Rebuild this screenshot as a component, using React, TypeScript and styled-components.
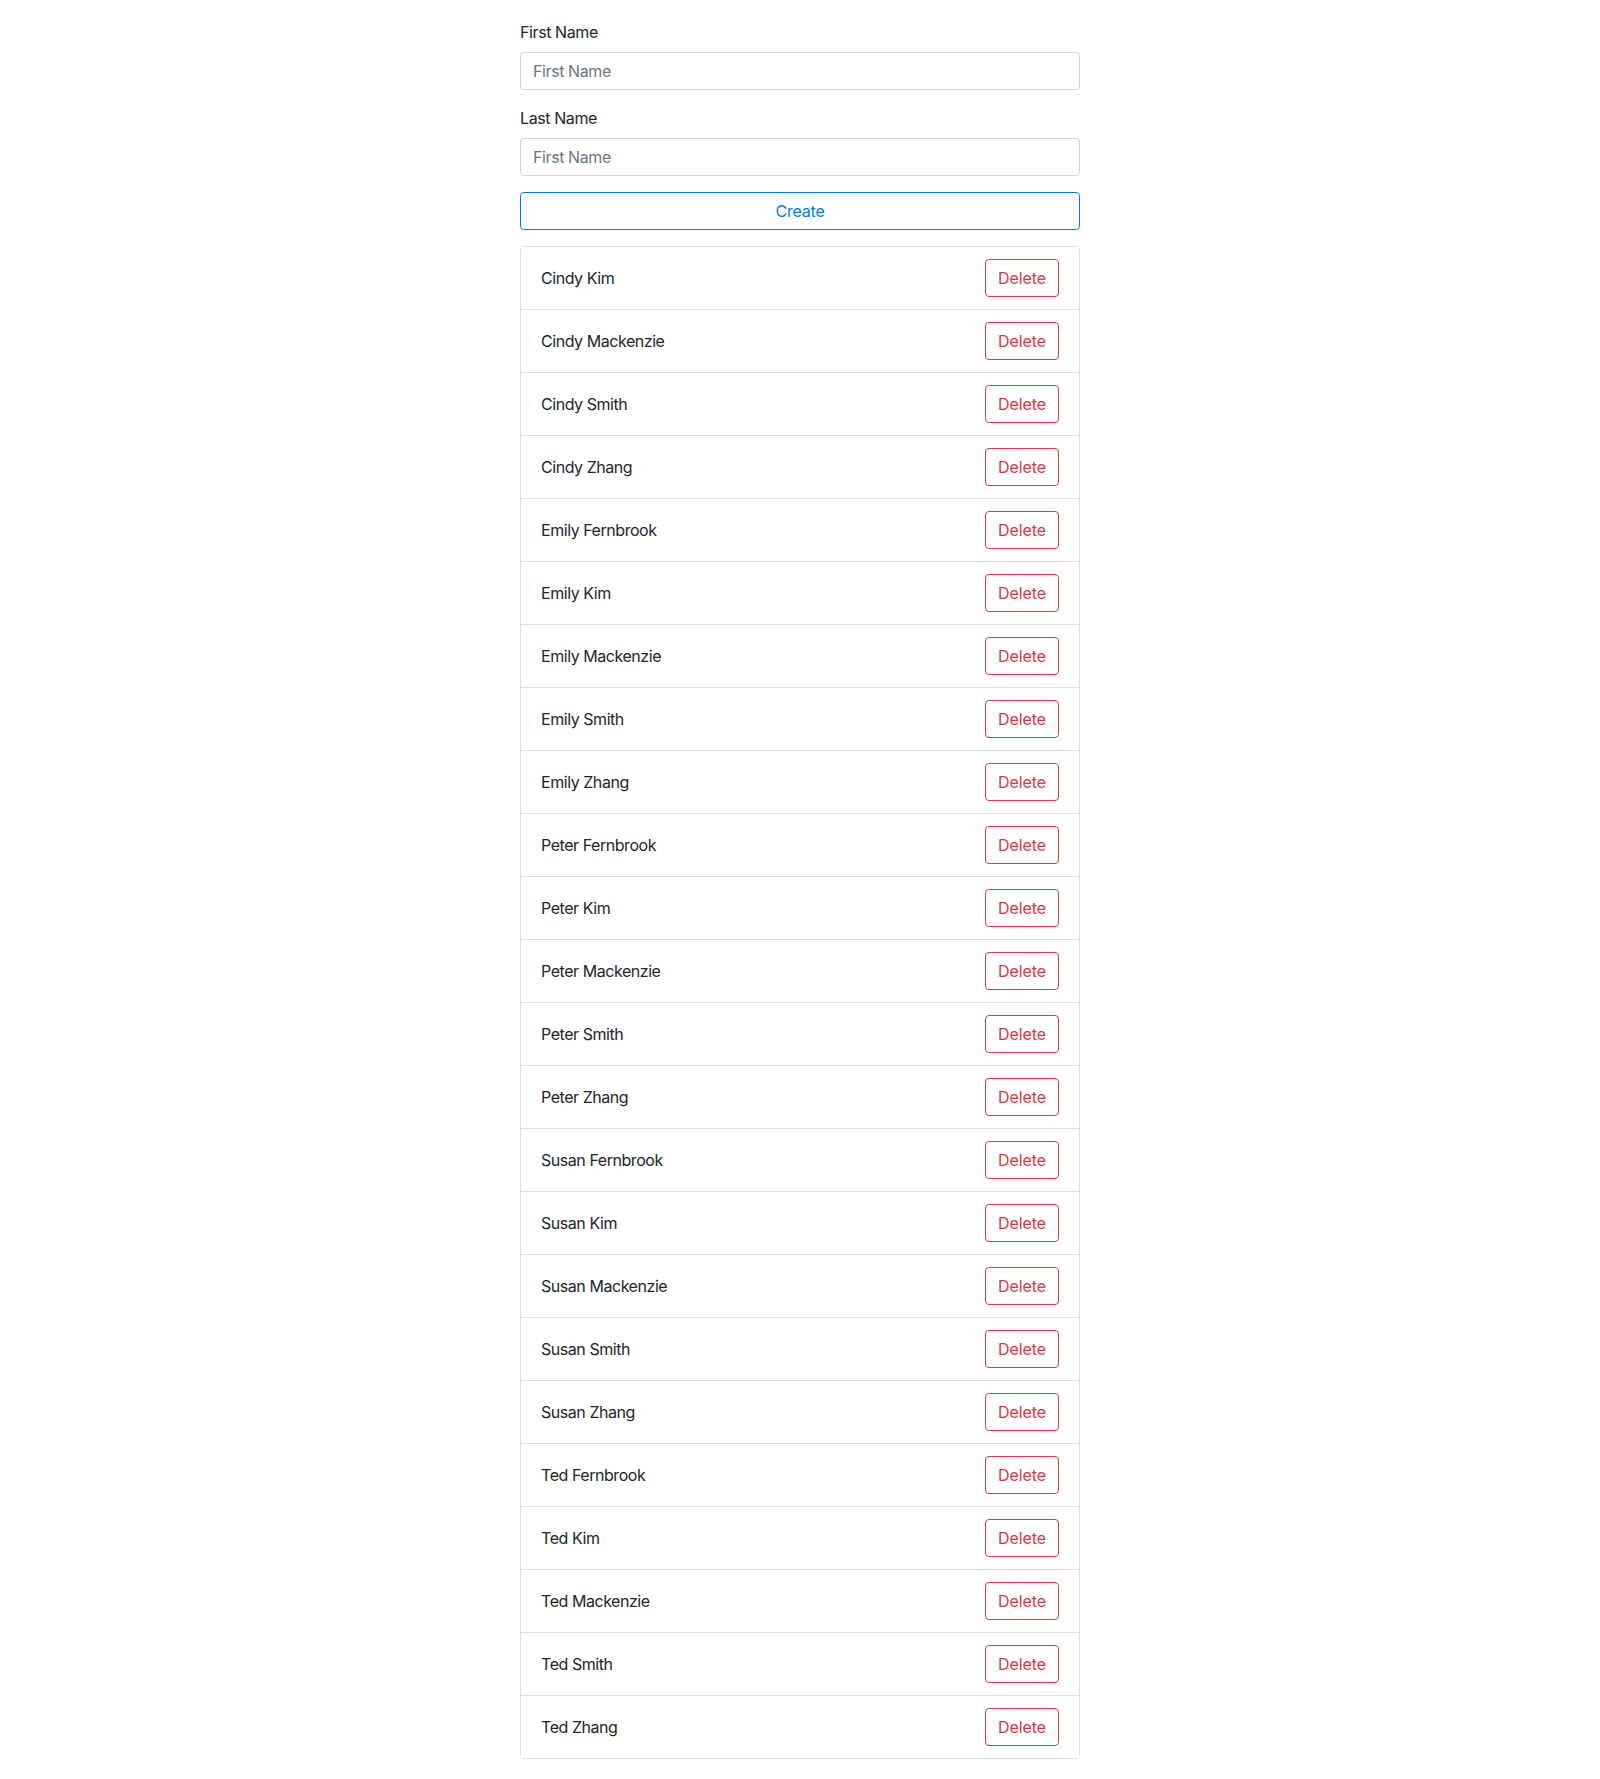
import styled, { createGlobalStyle } from "styled-components";

const firstNames = ["Cindy", "Emily", "Peter", "Susan", "Ted"];
const lastNames = ["Fernbrook", "Kim", "Mackenzie", "Smith", "Zhang"];

const people = firstNames
  .flatMap((first) => lastNames.map((last) => `${first} ${last}`))
  .filter((name) => name !== "Cindy Fernbrook");

const GlobalStyle = createGlobalStyle`
  html, body {
    margin: 0;
    padding: 0;
    background: #fff;
  }
  body {
    font-family: Inter, "Noto Sans", "Liberation Sans", sans-serif;
    font-size: 16px;
    line-height: 1.5;
    color: #212529;
  }
  * {
    box-sizing: border-box;
  }
`;

export default function App() {
  return (
    <>
      <GlobalStyle />
      <S.Page>
        <S.Container>
          <S.Form onSubmit={(e) => e.preventDefault()}>
            <S.Group>
              <S.Label htmlFor="first">First Name</S.Label>
              <S.Input id="first" placeholder="First Name" />
            </S.Group>
            <S.Group>
              <S.Label htmlFor="last">Last Name</S.Label>
              <S.Input id="last" placeholder="First Name" />
            </S.Group>
            <S.CreateButton type="submit">Create</S.CreateButton>
          </S.Form>
          <S.List>
            {people.map((name) => (
              <S.Item key={name}>
                <S.Name>{name}</S.Name>
                <S.DeleteButton type="button">Delete</S.DeleteButton>
              </S.Item>
            ))}
          </S.List>
        </S.Container>
      </S.Page>
    </>
  );
}

const S = {
  Page: styled.div`
    display: flex;
    justify-content: center;
    padding: 20px 0;
  `,

  Container: styled.div`
    width: 560px;
    display: flex;
    flex-direction: column;
  `,

  Form: styled.form`
    display: flex;
    flex-direction: column;
    margin-bottom: 16px;
  `,

  Group: styled.div`
    display: flex;
    flex-direction: column;
    margin-bottom: 16px;
  `,

  Label: styled.label`
    display: block;
    margin-bottom: 8px;
    line-height: 24px;
    font-size: 16px;
    letter-spacing: -0.4px;
  `,

  Input: styled.input`
    height: 38px;
    width: 100%;
    padding: 6px 12px;
    font-family: inherit;
    font-size: 16px;
    line-height: 1.5;
    letter-spacing: -0.4px;
    color: #495057;
    background: #fff;
    border: 1px solid #ced4da;
    border-radius: 4px;
    outline: none;

    &::placeholder {
      color: #6c757d;
    }
  `,

  CreateButton: styled.button`
    height: 38px;
    width: 100%;
    padding: 6px 12px;
    font-family: inherit;
    font-size: 16px;
    line-height: 1.5;
    letter-spacing: -0.2px;
    color: #007bff;
    background: transparent;
    border: 1px solid #007bff;
    border-radius: 4px;
    cursor: pointer;
  `,

  List: styled.ul`
    list-style: none;
    margin: 0;
    padding: 0;
    display: flex;
    flex-direction: column;
    border: 1px solid rgba(0, 0, 0, 0.125);
    border-radius: 4px;
  `,

  Item: styled.li`
    display: flex;
    align-items: center;
    justify-content: space-between;
    padding: 12px 20px;
    height: 63px;
    background: #fff;

    & + & {
      border-top: 1px solid rgba(0, 0, 0, 0.125);
    }

    &:first-child {
      height: 62px;
    }
  `,

  Name: styled.span`
    letter-spacing: -0.45px;
  `,

  DeleteButton: styled.button`
    height: 38px;
    padding: 6px 12px;
    font-family: inherit;
    font-size: 16px;
    line-height: 1.5;
    letter-spacing: -0.1px;
    color: #dc3545;
    background: transparent;
    border: 1px solid #dc3545;
    border-radius: 4px;
    cursor: pointer;
  `,
};
